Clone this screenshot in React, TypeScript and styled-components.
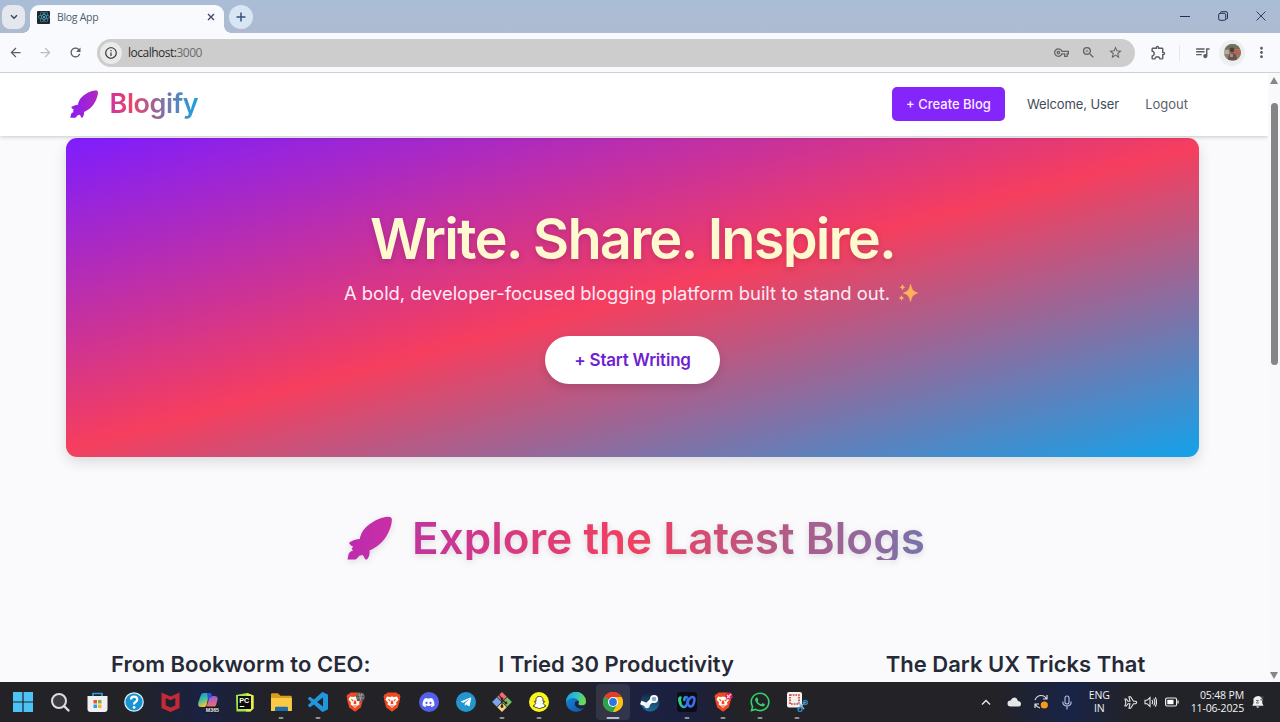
import React from "react";
import styled, { createGlobalStyle } from "styled-components";
import {
  MdArrowBack, MdArrowForward, MdRefresh, MdInfoOutline, MdOutlineVpnKey, MdZoomIn,
  MdStarBorder, MdOutlineExtension, MdQueueMusic, MdMoreVert,
} from "react-icons/md";
import { FaReact, FaDiscord, FaTelegramPlane, FaSnapchatGhost, FaWhatsapp } from "react-icons/fa";

const Global = createGlobalStyle`
  * { box-sizing: border-box; }
  body { margin: 0; overflow: hidden; font-family: Inter, "Liberation Sans", sans-serif; }
  h1, h2, h3, p { margin: 0; }
  svg { display: block; flex: none; }
  button { font: inherit; border: 0; }
`;

const Desktop = styled.div`
  width: 1280px; height: 722px; overflow: hidden;
  display: flex; flex-direction: column; position: relative;
`;

/* Browser chrome */
const TabStrip = styled.div`
  height: 33px; flex: none; display: flex; align-items: flex-end;
  background: linear-gradient(#a9bdd6, #aebbd0);
  padding-left: 2px;
`;
const RoundButton = styled.div<{ $w: number; $radius: number; $bg: string }>`
  width: ${p => p.$w}px; height: 24px; border-radius: ${p => p.$radius}px;
  background: ${p => p.$bg}; display: grid; place-items: center;
  margin-bottom: 4px; flex: none;
`;
const Tab = styled.div`
  width: 194px; height: 28px; margin: 0 5px 0 5px; padding: 0 9.5px 4px 7px;
  display: flex; align-items: center; background: #f8fafd; border-radius: 9px 9px 0 0;
  position: relative;
  &::before, &::after {
    content: ""; position: absolute; bottom: 0; width: 7px; height: 7px;
  }
  &::before { left: -7px; background: radial-gradient(circle at 0 0, transparent 6.5px, #f8fafd 7px); }
  &::after { right: -7px; background: radial-gradient(circle at 100% 0, transparent 6.5px, #f8fafd 7px); }
`;
const Favicon = styled.div`
  width: 13px; height: 13px; background: #20262e; color: #4fb3c9; border-radius: 1px;
  display: grid; place-items: center; font-size: 12px;
`;
const TabTitle = styled.span`
  flex: 1; margin-left: 7px; font: 10.5px "Open Sans", sans-serif; letter-spacing: -0.3px; color: #4f5d72;
`;
const WindowControls = styled.div`
  margin-left: auto; height: 31px; align-self: flex-start; display: flex; align-items: center; gap: 28px; padding-right: 14px;
`;
const Toolbar = styled.div`
  height: 40px; flex: none; display: flex; align-items: center; background: #f8fafd;
  border-bottom: 1px solid #cfd1d4; color: #5b5e63; padding: 0 9px 0 8px;
`;
const NavButtons = styled.div`
  display: flex; gap: 15px; margin-right: 14px;
`;
const Address = styled.div`
  width: 1038px; height: 28px; border-radius: 14px; background: #cdcdcd;
  display: flex; align-items: center; padding: 0 12px 0 3px; color: #606265;
`;
const InfoBadge = styled.div`
  width: 22px; height: 22px; border-radius: 50%; background: #eaeaea; color: #333;
  display: grid; place-items: center; margin-right: 6px;
`;
const Url = styled.span`
  flex: 1; font: 12px/16px "Open Sans", sans-serif; letter-spacing: -0.5px; color: #2c2c2c; padding-top: 1px;
  span { color: #6c6c6c; }
`;
const AddressIcons = styled.div` display: flex; gap: 12px; align-items: center; `;
const ToolbarActions = styled.div`
  flex: 1; display: flex; align-items: center; padding-left: 15px;
`;
const Divider = styled.i` width: 1px; height: 16px; background: #e3e8f0; margin: 0 14px 0 12px; `;
const AvatarRing = styled.div`
  width: 26px; height: 26px; border-radius: 50%; background: #eceef0; margin: 0 8px 0 8px;
  display: grid; place-items: center;
`;

/* Page */
const Viewport = styled.div` flex: 1; min-height: 0; display: flex; background: #fafafd; `;
const Page = styled.main` flex: 1; overflow: hidden; display: flex; flex-direction: column; `;
const Header = styled.header`
  height: 63px; flex: none; background: #fff; display: flex; align-items: center;
  padding: 0 80px 0 70px; box-shadow: 0 1px 4px rgba(0,0,0,.2); z-index: 1;
`;
const Logo = styled.div` display: flex; align-items: center; padding-bottom: 1px; `;
const LogoText = styled.span`
  margin-left: 11.5px; font-size: 27px; line-height: 36px; font-weight: 600; letter-spacing: -0.4px;
  background: linear-gradient(90deg, #cd35a0 0%, #e8446c 24%, #16a3e0 100%);
  -webkit-background-clip: text; background-clip: text; color: transparent;
`;
const Links = styled.nav` margin-left: auto; display: flex; align-items: center; font-size: 13px; line-height: 17px; `;
const CreateButton = styled.button`
  width: 113px; height: 34px; border-radius: 5px; background: #8425fb; color: #f9efff; padding: 0;
  font-size: 13px; font-weight: 500; letter-spacing: 0; margin: 0 22px 1px 0; white-space: nowrap;
`;
const NavLink = styled.span<{ $color: string; $ls: string }>`
  color: ${p => p.$color}; letter-spacing: ${p => p.$ls}; margin-right: 26px; white-space: nowrap;
  &:last-child { margin-right: 0; }
`;
const Hero = styled.section`
  margin: 2px 0 0 66px; width: 1133px; height: 319px; flex: none; border-radius: 11px;
  background: linear-gradient(165deg, #7e1dff 0%, #f63e5e 50%, #13a2ea 100%);
  box-shadow: 0 5px 14px rgba(0,0,0,.13);
  display: flex; flex-direction: column; align-items: center; padding-top: 73px;
`;
const HeroTitle = styled.h1`
  font-size: 56px; line-height: 56px; font-weight: 600; letter-spacing: -1.85px; white-space: nowrap;
  background: #fff9cf; -webkit-background-clip: text; background-clip: text; color: transparent;
  filter: drop-shadow(0 2px 3px rgba(0,0,0,.15));
`;
const HeroText = styled.p`
  display: flex; align-items: center; gap: 8px; margin-top: 11px; white-space: nowrap;
  font-size: 18.4px; line-height: 30px; color: #fdeaf3; padding-right: 3px;
`;
const StartButton = styled.button`
  margin-top: 28px; width: 175px; height: 48px; border-radius: 24px; background: #fff; color: #701fd0;
  font-size: 17px; font-weight: 600; letter-spacing: -0.2px; padding: 0; box-shadow: 0 4px 8px rgba(0,0,0,.12);
`;
const SectionHeading = styled.div`
  width: 1133px; margin: 59px 0 0 66px; padding-left: 7px; display: flex; justify-content: center; gap: 20px;
  filter: drop-shadow(0 2px 3px rgba(0,0,0,.12)); height: 44px; flex: none;
`;
const SectionTitle = styled.h2`
  font-size: 44px; line-height: 44px; font-weight: 600; letter-spacing: 0.05px; white-space: nowrap;
  background: linear-gradient(90deg, #b833a8 -8%, #f23f5f 42.5%, #7a72ac 100%);
  -webkit-background-clip: text; background-clip: text; color: transparent;
`;
const Cards = styled.div`
  width: 1133px; margin: 87px 0 0 66px; display: grid; grid-template-columns: repeat(3, 1fr); column-gap: 29px;
`;
const Card = styled.article` padding-left: 45px; white-space: nowrap; `;
const CardTitle = styled.h3`
  font-size: 22px; line-height: 34px; font-weight: 600; letter-spacing: 0.02px; color: #262a36;
`;
const Scrollbar = styled.div`
  width: 12px; flex: none; background: #f9f9fb; display: flex; flex-direction: column; align-items: center;
  padding: 4px 0 3px;
`;
const Thumb = styled.div` width: 7px; height: 262px; border-radius: 4px; background: #858585; margin: 19px 0 auto; `;

/* Taskbar */
const Taskbar = styled.footer`
  height: 40px; flex: none; display: flex; color: #f2f2f2; padding-left: 5px;
  background: linear-gradient(90deg, #222227 0, #222227 130px, #1a2142 205px, #222227 270px,
    #222227 570px, #1d2140 640px, #1b2040 685px, #222227 740px, #222227 1000px, #182347 1070px, #222329 1130px);
`;
const Apps = styled.div` display: grid; grid-template-columns: repeat(22, 36.85px); `;
const AppSlot = styled.div<{ $active?: boolean }>`
  position: relative; display: grid; place-items: center; border-radius: 4px; margin: 2px 1px;
  background: ${p => (p.$active ? "rgba(255,255,255,.09)" : "none")};
`;
const Indicator = styled.i<{ $active?: boolean }>`
  position: absolute; bottom: 1px; left: 50%; transform: translateX(-50%);
  width: ${p => (p.$active ? 13 : 5)}px; height: 2.5px; border-radius: 2px;
  background: ${p => (p.$active ? "#b9bccb" : "#8f9096")};
`;
const Disc = styled.div<{ $bg: string; $fg: string; $fs: number }>`
  width: 20px; height: 20px; border-radius: 50%; background: ${p => p.$bg}; color: ${p => p.$fg};
  font-size: ${p => p.$fs}px; display: grid; place-items: center;
`;
const Tray = styled.div`
  margin-left: auto; display: flex; align-items: center; padding-right: 15px;
  font: 10.5px/13.5px "Open Sans", sans-serif; letter-spacing: -0.15px;
`;
const TrayText = styled.div<{ $align: string; $m: string }>`
  text-align: ${p => p.$align}; margin: ${p => p.$m}; white-space: nowrap;
`;
const TrayItem = styled.div<{ $m: number }>` margin-right: ${p => p.$m}px; `;

/* Pointer lies over the page */
const Pointer = styled.svg` position: absolute; left: 940px; top: 107px; `;

const Rocket = ({ w, h, a, b, id }: { w: number; h: number; a: string; b: string; id: string }) => (
  <svg width={w} height={h} viewBox="0 0 44 44" preserveAspectRatio="none">
    <defs><linearGradient id={id}><stop stopColor={a} /><stop offset="1" stopColor={b} /></linearGradient></defs>
    <path fill={`url(#${id})`} d="M43.8 3C43.500 1.200 42 .5 39.500 .7C32 1.500 22 6.500 16.500 13.500C14 17 13 20 12.500 23C9 23 5 24.500 2 26.800C2.500 28.500 4 30 6 30.500L4.500 33L6 34.500C3 35.500 1.500 37 1.300 39.500L.5 43.500H8.500C10 42.500 11 41 12 39.800L15.500 39L18 43.500H19.500C21.500 41 22.500 38 22 34.500C29 31.500 36 26 40 17.500C42.500 12 44.200 7 43.800 3Z" />
  </svg>
);

const BraveIcon = ({ badge }: { badge?: string }) => (
  <svg width="20" height="20" viewBox="0 0 20 20">
    <path d="M5.500 .5h9l1.500 1.500 1.500.3 1 2.200-.7 2 .2 1-2.200 8L10 19.800 4.200 15.500 2 7.500l.2-1-.7-2 1-2.200L4 2z" fill="#f0491f" />
    <path d="M5 4.500l3 .5L10 4.500l2 .5L15 4.500l1.500 3-2.500 3 .5 2-2.500 1.500L10 16l-2-2-2.500-1.500L6 10.500 3.500 7.500z" fill="#fff" />
    <path d="M5.500 7l3.200 1-1.200 1.500zM14.500 7l-3.200 1 1.200 1.500zM9.200 8.500h1.600l.8 3-1.600 1-1.600-1zM7.500 13l2.500.8 2.500-.8-2.500 2z" fill="#f0491f" />
    {badge === "globe" && <g><circle cx="15.500" cy="5" r="4.500" fill="#555" /><path d="M12 3h7M11 6h8M14 1l2 8M17 1l-2 8" stroke="#aaa" strokeWidth=".7" /></g>}
    {badge === "pin" && <g><circle cx="16" cy="4" r="3.600" fill="#d2204e" /><path d="M14 6l4-4M14 3l3 3" stroke="#ffd0d5" strokeWidth="1.200" /></g>}
  </svg>
);

const Sparkles = () => (
  <svg width="20" height="20" viewBox="0 0 20 20" fill="#fbb35b">
    <path d="M12.500 1.500C13.800 7 15 8.500 19.500 10C15 11.500 13.800 13 12.500 18.500C11.200 13 10 11.500 5.500 10C10 8.500 11.200 7 12.500 1.500Z" stroke="#fbb35b" strokeWidth=".8" strokeLinejoin="round" />
    <path d="M4.500 1C5 3 5.500 3.500 7.500 4.200C5.500 4.900 5 5.500 4.500 7.500C4 5.500 3.500 4.900 1.500 4.200C3.500 3.500 4 3 4.500 1Z" />
    <path d="M3.500 12C4 13.800 4.500 14.400 6.300 15C4.500 15.600 4 16.200 3.500 18C3 16.200 2.500 15.600 .7 15C2.500 14.400 3 13.800 3.500 12Z" />
  </svg>
);

type Entry = { icon: React.ReactNode; open?: boolean; active?: boolean };
const apps: Entry[] = [
  { icon: <svg width="20" height="20" fill="#4cc2f5"><path d="M0 0h9.400v9.400H0zM10.600 0H20v9.400h-9.400zM0 10.600h9.400V20H0zM10.600 10.600H20V20h-9.400z" /></svg> },
  { icon: <svg width="20" height="20" fill="none"><circle cx="9" cy="9" r="7" fill="#3b3d42" stroke="#dedede" strokeWidth="2" /><path d="M14 14l4.500 4.500" stroke="#dedede" strokeWidth="2.400" strokeLinecap="round" /></svg> },
  { icon: <svg width="21" height="20"><path d="M6 4V1.500h9V4" fill="none" stroke="#2b9fdc" strokeWidth="1.700" /><path d="M.5 4h20v13q0 3-3 3h-14q-3 0-3-3z" fill="#f1f1f3" /><path d="M6.500 8h3.500v3.500H6.500z" fill="#e95433" /><path d="M11 8h3.500v3.500H11z" fill="#80b342" /><path d="M6.500 12.500h3.500V16H6.500z" fill="#2f9edc" /><path d="M11 12.500h3.500V16H11z" fill="#f2b632" /></svg> },
  { icon: <svg width="20" height="20"><circle cx="10" cy="10" r="9.200" fill="#1793d1" stroke="#d7edf7" strokeWidth="1.300" /><path d="M7 7.500Q7 4.700 10.100 4.700T13.200 7.500Q13.200 9 11.500 10T10.100 12.500" fill="none" stroke="#fff" strokeWidth="2.300" /><circle cx="10.100" cy="15.400" r="1.400" fill="#fff" /></svg> },
  { icon: <svg width="19" height="20"><path d="M.5 .5l9 4 9-4V16l-9 4-9-4zM4.700 6v7.400l4.800 2.200 4.800-2.200V6L9.500 8.200z" fill="#c32a35" fillRule="evenodd" /></svg> },
  { icon: <svg width="22" height="21" viewBox="0 0 22 21"><defs><linearGradient id="cpA" x2=".4" y2="1"><stop stopColor="#1d86e8" /><stop offset=".5" stopColor="#35bfa1" /><stop offset="1" stopColor="#f2c331" /></linearGradient><linearGradient id="cpB" x2=".2" y2="1"><stop stopColor="#8a57e8" /><stop offset="1" stopColor="#f37068" /></linearGradient></defs><path d="M6 1h6.500L9 15H4Q0 15 1.500 10L3.500 4Q4.500 1 6 1z" fill="url(#cpA)" /><path d="M13 4h4q4.500 0 3.500 4l-1.500 5q-1 3-4 3H9z" fill="url(#cpB)" /><path d="M10 1h4l1.500 4-3 .5-1.500 4z" fill="#2a54cf" /><rect x="8" y="14.500" width="13.500" height="6" fill="#15151a" /><text x="8.800" y="19.600" fontSize="5.300" fontFamily="Liberation Sans" fontWeight="700" fill="#eee">M365</text></svg> },
  { icon: <svg width="19" height="19" viewBox="0 0 19 19"><path d="M1 2L12 0l6.500 2.500v13l-3 3H1.500z" fill="#a5e34a" /><path d="M12 0l6.500 2.500v13l-3 3-4.500 0z" fill="#e8ee4d" /><rect x="3" y="3" width="13" height="13" fill="#0b0f0b" /><text x="4.300" y="10" fontSize="7.200" fontFamily="Liberation Sans" fontWeight="700" fill="#fff">PC</text><path d="M4.800 13.500h4.500" stroke="#fff" /></svg> },
  { open: true, icon: <svg width="21" height="19"><path d="M0 1.500Q0 .3 1.300.3H7l2.500 2.500h10q1.300 0 1.300 1.300V18H0z" fill="#dc9c22" /><path d="M0 5h20.800v13H0z" fill="#fbc944" /><path d="M4 18v-3.200q0-1 1-1h11q1 0 1 1V18z" fill="#1b6fb0" /></svg> },
  { open: true, icon: <svg width="20" height="20" viewBox="0 0 24 24"><path fill="#2196dc" d="M23.150 2.587L18.210.21a1.494 1.494 0 0 0-1.705.29l-9.460 8.630-4.120-3.128a.999.999 0 0 0-1.276.057L.327 7.261A1 1 0 0 0 .326 8.740L3.899 12 .326 15.260a1 1 0 0 0 .001 1.479L1.650 17.940a.999.999 0 0 0 1.276.057l4.120-3.128 9.460 8.630a1.492 1.492 0 0 0 1.704.290l4.942-2.377A1.500 1.500 0 0 0 24 20.060V3.939a1.500 1.500 0 0 0-.850-1.352zm-5.146 14.861L10.826 12l7.178-5.448v10.896z" /></svg> },
  { icon: <BraveIcon badge="globe" /> },
  { icon: <BraveIcon /> },
  { icon: <Disc $bg="#5560e8" $fg="#fff" $fs={13}><FaDiscord /></Disc> },
  { icon: <Disc $bg="#2496cf" $fg="#fff" $fs={12}><FaTelegramPlane /></Disc> },
  { open: true, icon: <svg width="22" height="22" viewBox="0 0 22 22"><g transform="rotate(45 11 11)"><rect x="4" y="4" width="6.700" height="6.700" fill="#ef6d6d" /><rect x="11.300" y="4" width="6.700" height="6.700" fill="#7bbd62" /><rect x="4" y="11.300" width="6.700" height="6.700" fill="#78a5ee" /><rect x="11.300" y="11.300" width="6.700" height="6.700" fill="#f1d680" /></g><path d="M8 4l3 4v8M11 9l4 3" stroke="#2b2523" strokeWidth="1.200" fill="none" /><g fill="#2b2523"><circle cx="11" cy="8" r="1.400" /><circle cx="11" cy="15.500" r="1.400" /><circle cx="15" cy="12" r="1.400" /></g></svg> },
  { open: true, icon: <Disc $bg="#fbf61b" $fg="#fff" $fs={13}><FaSnapchatGhost stroke="#222" strokeWidth="35" /></Disc> },
  { icon: <svg width="20" height="20" viewBox="0 0 20 20"><defs><linearGradient id="edA" x2="1" y2=".3"><stop stopColor="#1b96df" /><stop offset=".55" stopColor="#2fc1c8" /><stop offset="1" stopColor="#6bd94e" /></linearGradient><linearGradient id="edB" x2="1" y2="1"><stop stopColor="#1590e0" /><stop offset="1" stopColor="#0f4c9f" /></linearGradient></defs><circle cx="10" cy="10" r="10" fill="url(#edB)" /><path d="M0 10A10 10 0 0 1 20 9.500Q20 13.500 15.500 13.500Q12 13.500 12.300 11.500Q13.500 10.300 12.500 8.500Q10 5 5 6.300Q1.500 7.300 0 10z" fill="url(#edA)" /><path d="M12.300 11.500Q12 13.500 15.500 13.500Q18.500 13.500 19.600 12L20.500 14.500 18.500 16Q14 17.500 11 15.500T9.200 10Q10 8.500 12.300 9Q13.200 10.500 12.300 11.500z" fill="#222338" /></svg> },
  { open: true, active: true, icon: <svg width="20" height="20" viewBox="0 0 20 20"><circle cx="10" cy="10" r="10" fill="#fbc116" /><path d="M10 10L1.340 5A10 10 0 0 1 18.660 5z" fill="#e33b2e" /><path d="M10 10L1.340 5A10 10 0 0 0 10 20L14.300 12.500z" fill="#2ba24c" /><path d="M10 5h8.660A10 10 0 0 1 10 20l4.300-7.500z" fill="#fbc116" /><circle cx="10" cy="10" r="5" fill="#fff" /><circle cx="10" cy="10" r="3.900" fill="#2f74e0" /></svg> },
  { icon: <svg width="20" height="20" viewBox="0 0 20 20"><defs><linearGradient id="st" x2="0" y2="1"><stop stopColor="#14233f" /><stop offset="1" stopColor="#1b6d9c" /></linearGradient></defs><circle cx="10" cy="10" r="9.500" fill="url(#st)" /><path d="M.8 10.500L7 13l5-5" stroke="#fff" strokeWidth="4" fill="none" /><circle cx="14" cy="7" r="4" fill="#fff" /><circle cx="14" cy="7" r="2.300" fill="#8da9bd" /><circle cx="7" cy="13.500" r="2.700" fill="#e9eff3" /></svg> },
  { open: true, icon: <svg width="20" height="20" viewBox="0 0 20 20"><defs><linearGradient id="wx"><stop stopColor="#2ccf8a" /><stop offset=".5" stopColor="#2aa6dd" /><stop offset="1" stopColor="#2a62ee" /></linearGradient></defs><rect width="20" height="20" rx="3" fill="#0c0d12" /><g fill="none" stroke="url(#wx)" strokeWidth="2.500"><path d="M3 5.500Q1.500 7 3 11T7 15Q9.500 15 10.500 10T9 5Q7 5 7.500 9" /><path d="M10.500 10Q11.500 15 14 14.500T17.300 9Q18 5 15.500 5T10.500 10" stroke="#3a70f0" /></g><path d="M3.500 5.500Q2 7 3.500 11" fill="none" stroke="#2fd083" strokeWidth="2.500" strokeLinecap="round" /></svg> },
  { open: true, icon: <BraveIcon badge="pin" /> },
  { open: true, icon: <FaWhatsapp size={22} color="#31d366" /> },
  { open: true, icon: <svg width="22" height="20" viewBox="0 0 22 20"><rect x="1" width="15" height="15.500" rx="2" fill="#f4f2f1" /><rect x="4" y="3" width="9" height="9" fill="none" stroke="#c8412e" strokeWidth="1.700" strokeDasharray="1.700 1" /><path d="M12 17l7.500-7M12 10l6 7" stroke="#9fb4c4" strokeWidth="1.500" /><circle cx="19.300" cy="10.500" r="2" fill="none" stroke="#2786c4" strokeWidth="1.500" /><circle cx="14" cy="17.500" r="2" fill="none" stroke="#2786c4" strokeWidth="1.500" /></svg> },
];

export default function App() {
  return (
    <Desktop>
      <Global />
      <TabStrip>
        <RoundButton $w={23} $radius={8} $bg="#e4e8ee"><svg width="8" height="6"><path d="M1 1.200l3 3 3-3" fill="none" stroke="#3c4654" strokeWidth="1.500" /></svg></RoundButton>
        <Tab>
          <Favicon><FaReact /></Favicon>
          <TabTitle>Blog App</TabTitle>
          <svg width="8" height="8"><path d="M1 1l6 6M7 1L1 7" stroke="#3d4c63" strokeWidth="1.400" /></svg>
        </Tab>
        <RoundButton $w={24} $radius={12} $bg="#d7e5f4"><svg width="10" height="10"><path d="M5 .5v9M.5 5h9" stroke="#35537c" strokeWidth="1.500" /></svg></RoundButton>
        <WindowControls>
          <svg width="10" height="10"><path d="M0 5.500h10" stroke="#1f3350" /></svg>
          <svg width="10" height="10" fill="none" stroke="#22324c"><rect x=".7" y="2.300" width="7" height="7" rx="1.500" /><path d="M2.500 2.300V1.700q0-1 1-1H8q1.500 0 1.500 1.500V7q0 1-1.300 1" /></svg>
          <svg width="10" height="10"><path d="M.5.5l9 9M9.500.5l-9 9" stroke="#2d3f5a" /></svg>
        </WindowControls>
      </TabStrip>
      <Toolbar>
        <NavButtons>
          <MdArrowBack size={15} />
          <MdArrowForward size={15} color="#babdc2" />
          <MdRefresh size={15} />
        </NavButtons>
        <Address>
          <InfoBadge><MdInfoOutline size={14} /></InfoBadge>
          <Url>localhost:<span>3000</span></Url>
          <AddressIcons><MdOutlineVpnKey size={15} /><MdZoomIn size={15} /><MdStarBorder size={15} /></AddressIcons>
        </Address>
        <ToolbarActions>
          <MdOutlineExtension size={17} />
          <Divider />
          <MdQueueMusic size={17} />
          <AvatarRing>
            <svg width="17" height="17" viewBox="0 0 17 17"><defs><clipPath id="av"><circle cx="8.500" cy="8.500" r="8.500" /></clipPath></defs><g clipPath="url(#av)"><rect width="17" height="17" fill="#8b8272" /><path d="M0 0h17v5H0z" fill="#72705a" /><path d="M10 6h7v5h-7z" fill="#b8625a" /><path d="M0 6h5v4H0z" fill="#b5a8a0" /><circle cx="8" cy="6" r="2.400" fill="#5a3b32" /><path d="M4 16q0-7 4.500-7t4.500 7z" fill="#645450" /><path d="M6 10h3v3H6z" fill="#b8837b" /></g></svg>
          </AvatarRing>
          <MdMoreVert size={17} />
        </ToolbarActions>
      </Toolbar>
      <Viewport>
        <Page>
          <Header>
            <Logo>
              <Rocket w={28} h={28} a="#8a1df0" b="#b128c0" id="logoRocket" />
              <LogoText>Blogify</LogoText>
            </Logo>
            <Links>
              <CreateButton>+ Create Blog</CreateButton>
              <NavLink $color="#424b57" $ls="-0.1px">Welcome, User</NavLink>
              <NavLink $color="#5a616b" $ls="0">Logout</NavLink>
            </Links>
          </Header>
          <Hero>
            <HeroTitle>Write. Share. Inspire.</HeroTitle>
            <HeroText>A bold, developer-focused blogging platform built to stand out. <Sparkles /></HeroText>
            <StartButton>+ Start Writing</StartButton>
          </Hero>
          <SectionHeading>
            <Rocket w={45} h={44} a="#bb2cae" b="#c92fa6" id="headingRocket" />
            <SectionTitle>Explore the Latest Blogs</SectionTitle>
          </SectionHeading>
          <Cards>
            <Card><CardTitle>From Bookworm to CEO:</CardTitle></Card>
            <Card><CardTitle>I Tried 30 Productivity</CardTitle></Card>
            <Card><CardTitle>The Dark UX Tricks That</CardTitle></Card>
          </Cards>
        </Page>
        <Scrollbar>
          <svg width="8" height="7"><path d="M4 0l4 7H0z" fill="#858585" /></svg>
          <Thumb />
          <svg width="8" height="7"><path d="M4 7l4-7H0z" fill="#858585" /></svg>
        </Scrollbar>
      </Viewport>
      <Taskbar>
        <Apps>
          {apps.map((a, i) => (
            <AppSlot key={i} $active={a.active}>{a.icon}{a.open && <Indicator $active={a.active} />}</AppSlot>
          ))}
        </Apps>
        <Tray>
          <TrayItem $m={16}><svg width="10" height="7"><path d="M1 5.500l4-4 4 4" fill="none" stroke="#eee" strokeWidth="1.300" /></svg></TrayItem>
          <TrayItem $m={13}><svg width="14" height="10"><path d="M3.500 9.500a3 3 0 0 1 0-6Q5 .5 7.500.5T11 4q3 .3 3 3t-2.500 2.500z" fill="#e6e6e6" /></svg></TrayItem>
          <TrayItem $m={14}><svg width="14" height="16" viewBox="0 0 14 16" fill="none" stroke="#ddd" strokeWidth="1.200"><path d="M1 6Q3 1.500 7 1.500T12.500 5M13 1v4H9M1 14v-4h4M1.500 10.500Q3 13.500 6 14" /><circle cx="10.300" cy="11" r="3.600" fill="#f79a1c" stroke="none" /></svg></TrayItem>
          <TrayItem $m={17}><svg width="10" height="15" fill="none" stroke="#b8c3dc" strokeWidth="1.100"><rect x="3" y="1" width="4" height="8" rx="2" /><path d="M.8 6.500q0 4.500 4.200 4.500t4.200-4.500M5 11v3.500" /></svg></TrayItem>
          <TrayText $align="center" $m="0 14px 0 0">ENG<br />IN</TrayText>
          <TrayItem $m={6}><svg width="14" height="13" fill="none" stroke="#e6e6e6" strokeWidth="1.100"><path d="M1 3h1.300l1.700 2.300h2L5 .8h1.600L9.500 5.300h2.300q1.700 1.200 0 2.400H9.500L6.600 12.200H5l1-4.500H4L2.300 10H1l.8-3.500z" /></svg></TrayItem>
          <TrayItem $m={8}><svg width="13" height="12" fill="none" stroke="#e6e6e6" strokeWidth="1.100"><path d="M1 4.300h2L6 1.500v9L3 7.700H1zM8 4q1.300 2 0 4M9.700 2.500q2.200 3.500 0 7M11.300 1.300q2.500 4.700 0 9.400" /></svg></TrayItem>
          <TrayItem $m={12}><svg width="14" height="10"><rect x=".6" y="1" width="11" height="8" rx="1.500" fill="none" stroke="#eee" strokeWidth="1.200" /><path d="M2.300 2.800h6.200v4.400H2.300z" fill="#fff" /><path d="M12.500 3.500h1.200v3h-1.200z" fill="#eee" /></svg></TrayItem>
          <TrayText $align="right" $m="0 8px 0 0">05:48 PM<br />11-06-2025</TrayText>
          <svg width="13" height="14"><path d="M1.500 3.500Q3 1 6 1T10.500 4L10.200 8l1.300 2.800H.3L1.500 8z" fill="#efefef" /><path d="M4 11.500h3.500q-1.700 2.500-3.500 0z" fill="#efefef" /><path d="M4 5.500h2.500L4.300 8H7M8.500 2h3l-3 3h3" fill="none" stroke="#55565c" strokeWidth=".8" /></svg>
        </Tray>
      </Taskbar>
      <Pointer width="14" height="18" viewBox="0 0 14 18">
        <path d="M4 1.700Q4 .7 5 .7T6.200 1.700V7L11 8Q12.700 8.400 12.600 10L12 13.500 10.700 16.700H5L1.300 11.300Q1 9.800 2.500 10L4 11z" fill="#fff" stroke="#3a3048" strokeWidth="1" />
        <path d="M8.300 8v2M10.300 8.300v2" stroke="#777" strokeWidth=".7" />
      </Pointer>
    </Desktop>
  );
}
